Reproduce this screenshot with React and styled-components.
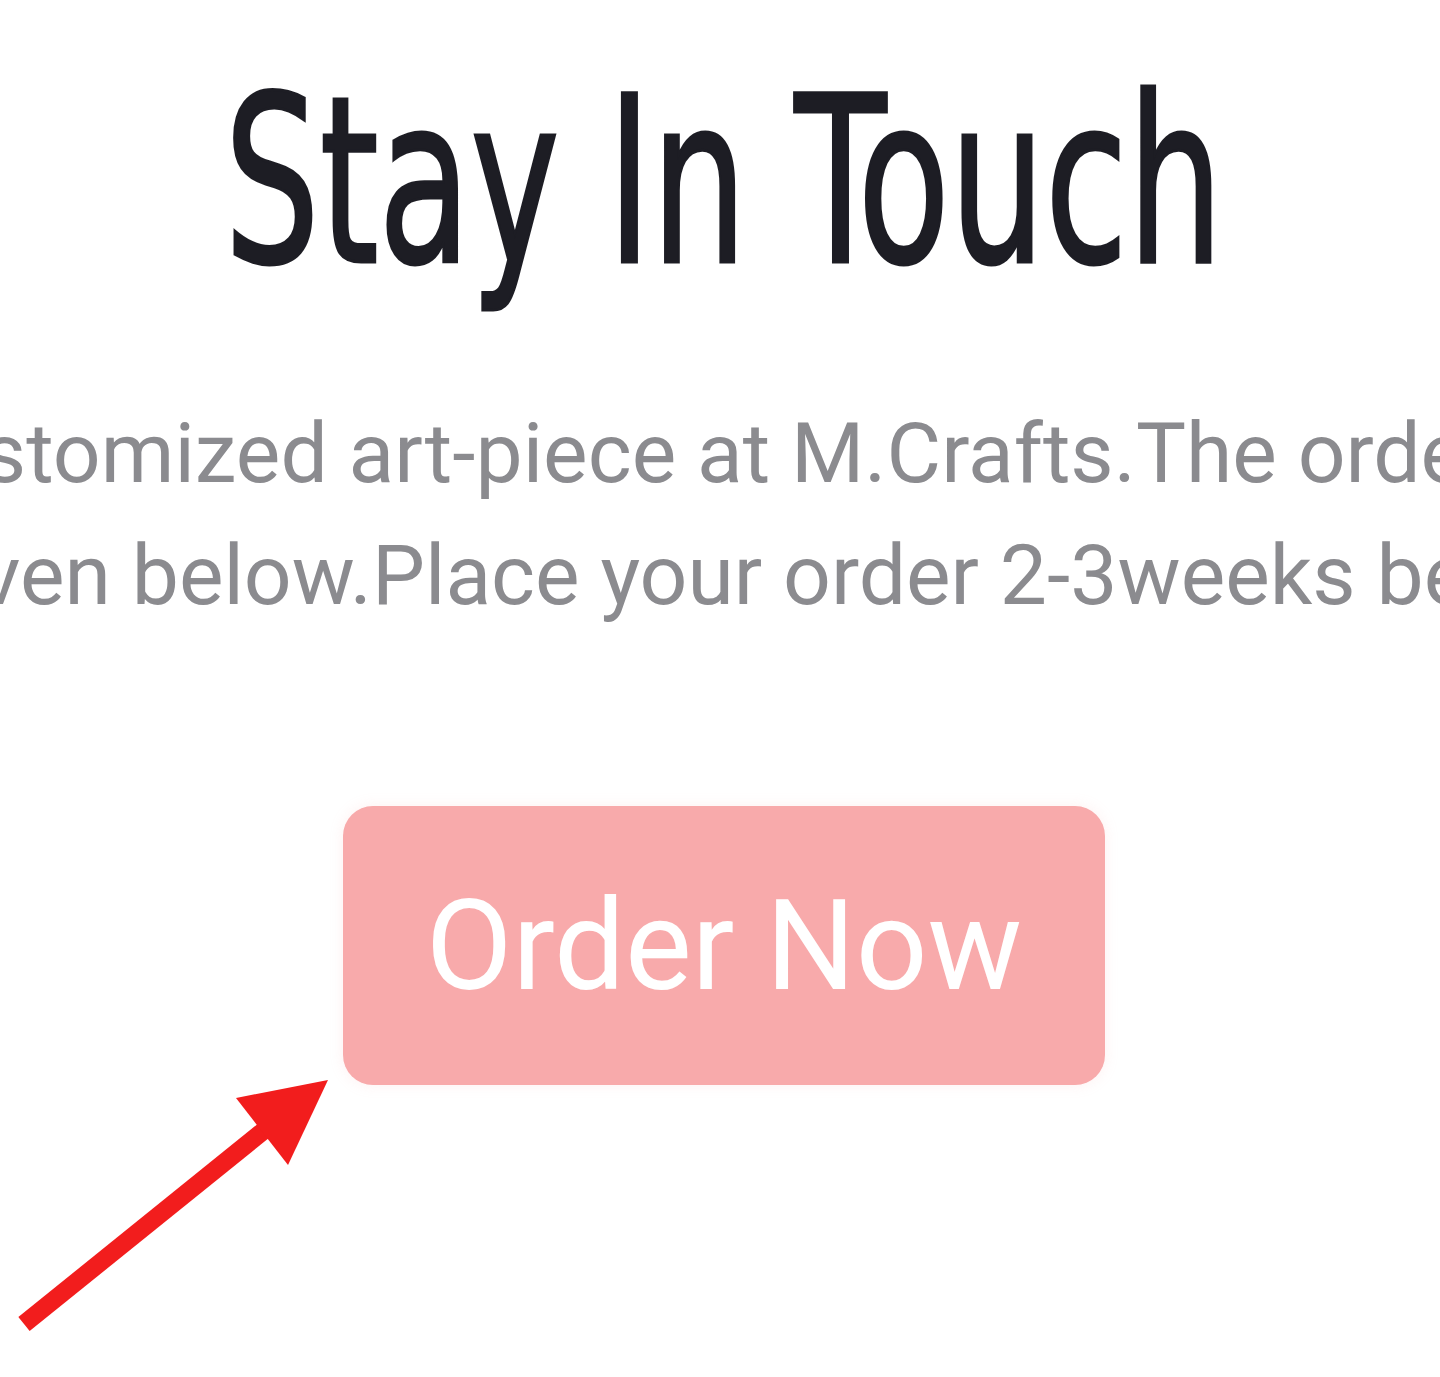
import React from 'react';
import styled, { createGlobalStyle } from 'styled-components';

const GlobalStyle = createGlobalStyle`
    html, body {
        margin: 0;
        padding: 0;
        background: #ffffff;
    }
    body {
        font-family: Roboto, "Liberation Sans", sans-serif;
    }
`;

// the shot is a close crop, so both lines run past the edges
const lines = [
    'stomized art-piece at M.Crafts.The orde',
    'ven below.Place your order 2-3weeks be',
];

const App = () => {
    return (
        <>
            <GlobalStyle />
            <Page>
                <Section>
                    <Title>
                        <TitleText>Stay In Touch</TitleText>
                    </Title>
                    <Text>
                        {lines.map((line) => (
                            <Line key={line}>{line}</Line>
                        ))}
                    </Text>
                    <OrderButton type="button">Order Now</OrderButton>
                </Section>
                <Arrow viewBox="0 0 1440 1377" aria-hidden="true">
                    <line x1="24" y1="1324" x2="272" y2="1124" stroke="#f21d1d" strokeWidth="18" />
                    <polygon points="328,1080 236,1098 288,1165" fill="#f21d1d" />
                </Arrow>
            </Page>
        </>
    );
};

export default App;

const Page = styled.div`
    position: relative;
    width: 1440px;
    height: 1377px;
    overflow: hidden;
    background: #ffffff;
`;

const Section = styled.section`
    display: flex;
    flex-direction: column;
    align-items: center;
    padding: 66px 0 0 8px;
`;

const Title = styled.h1`
    margin: 0;
    display: flex;
    justify-content: center;
    width: 100%;
    font-family: "Liberation Sans Narrow", "DejaVu Sans Condensed", "Liberation Sans", sans-serif;
    font-weight: 400;
    font-size: 232px;
    line-height: 1;
    color: #1d1d24;
    -webkit-text-stroke: 3px #1d1d24;
`;

const TitleText = styled.span`
    display: inline-block;
    white-space: nowrap;
    transform: scaleX(0.72);
`;

const Text = styled.div`
    margin-top: 95px;
    width: 100%;
    display: flex;
    flex-direction: column;
    align-items: center;
`;

const Line = styled.p`
    margin: 0;
    white-space: nowrap;
    font-family: Roboto, "Liberation Sans", sans-serif;
    font-size: 84px;
    line-height: 122px;
    color: #8b8b8f;
`;

const OrderButton = styled.button`
    margin-top: 169px;
    height: 279px;
    width: 762px;
    display: flex;
    align-items: center;
    justify-content: center;
    border: none;
    border-radius: 30px;
    background: #f8aaab;
    color: #ffffff;
    font-family: Roboto, "Liberation Sans", sans-serif;
    font-size: 126px;
    font-weight: 400;
    box-shadow: 0 0 14px rgba(248, 170, 171, 0.18);
    cursor: pointer;
`;

const Arrow = styled.svg`
    position: absolute;
    inset: 0;
    width: 1440px;
    height: 1377px;
    pointer-events: none;
`;
